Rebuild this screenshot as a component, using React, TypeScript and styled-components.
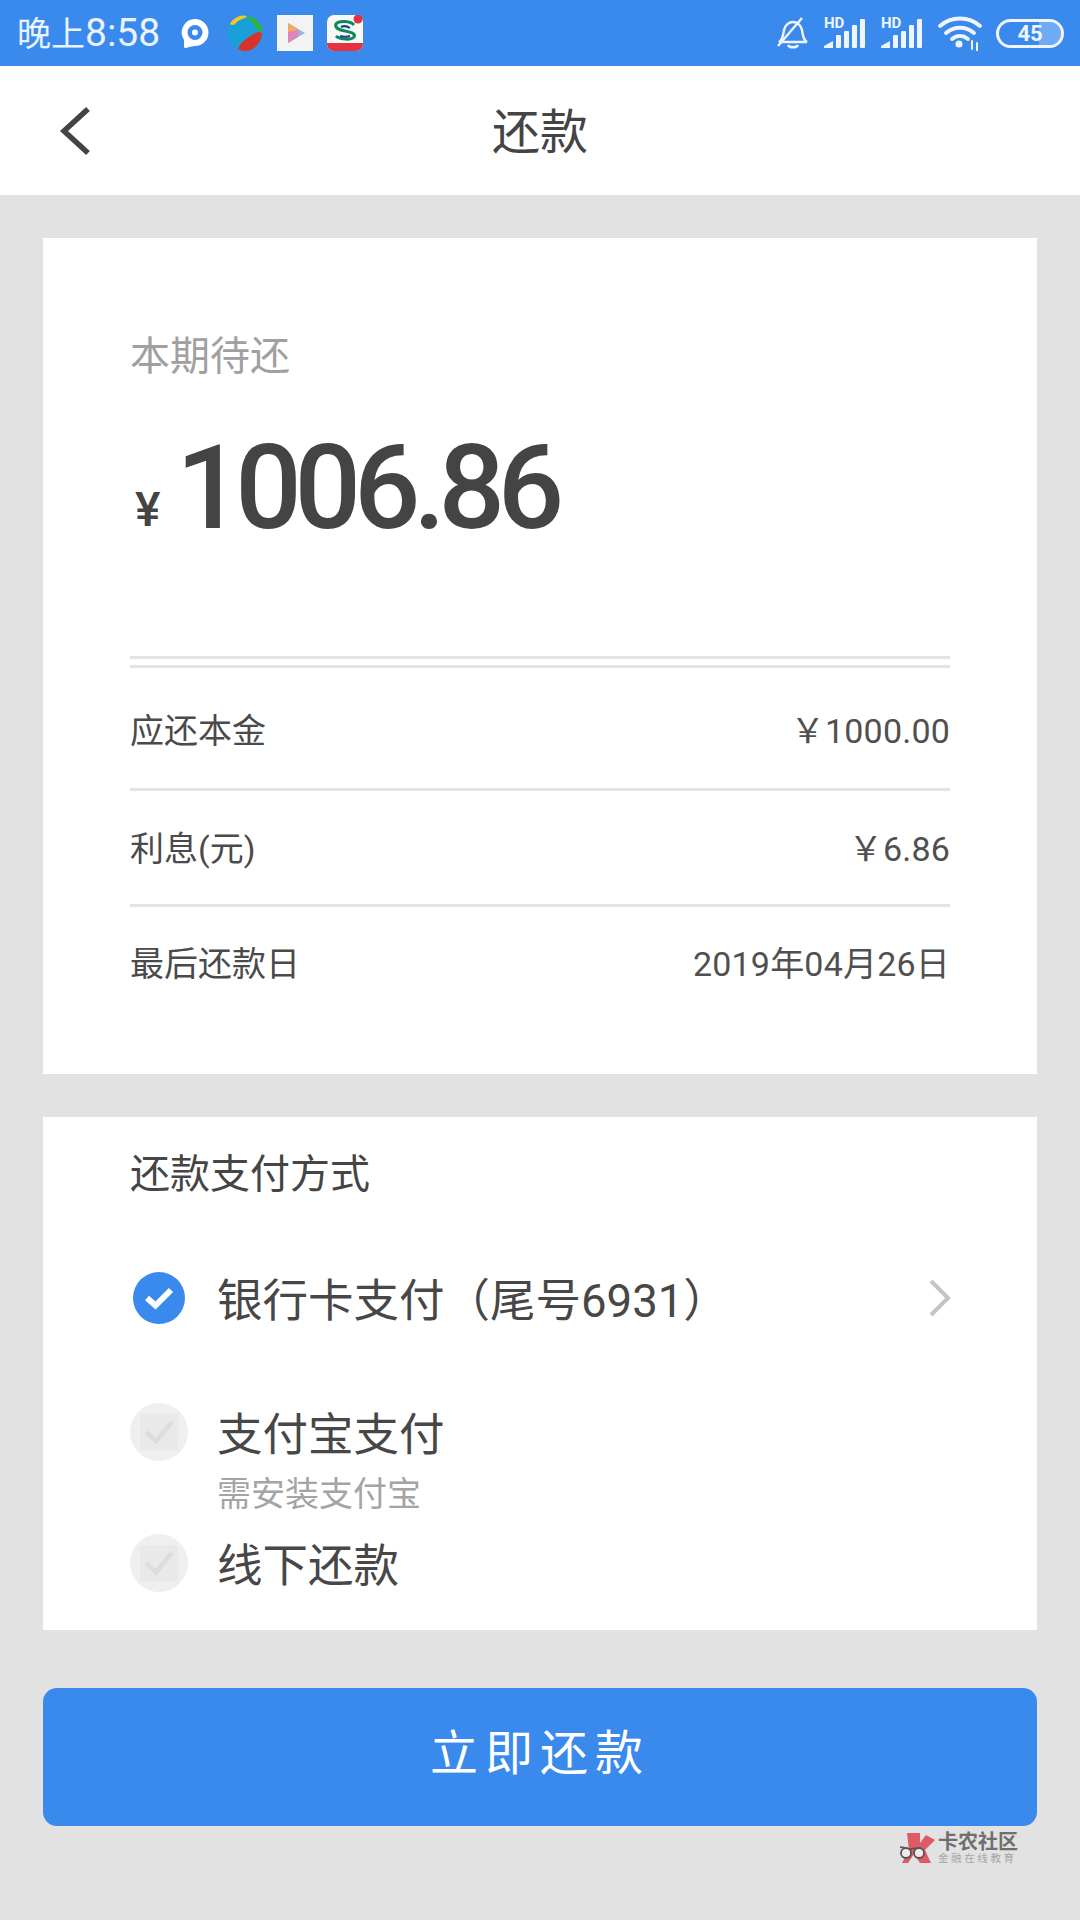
import React from "react";
import styled, { createGlobalStyle } from "styled-components";

const FONT = `Roboto, "Noto Sans CJK SC", "Noto Sans", sans-serif`;
const BLUE = "#3a8aee";
const GREY_BG = "#e2e2e2";
const RULE = "#e4e4e4";
const ICON = "#eef5ff";

const Global = createGlobalStyle`
  html, body { margin: 0; padding: 0; background: ${GREY_BG}; }
  * { box-sizing: border-box; }
`;

const Page = styled.div`
  width: 1080px;
  height: 1920px;
  background: ${GREY_BG};
  font-family: ${FONT};
  color: #454545;
  display: flex;
  flex-direction: column;
  overflow: hidden;
`;

const StatusBar = styled.header`
  height: 66px;
  background: ${BLUE};
  display: flex;
  align-items: center;
  justify-content: space-between;
  padding: 0 16px 0 17px;
  color: #eaf3ff;
`;
const StatusGroup = styled.div`
  display: flex;
  align-items: center;
`;
const Clock = styled.span`
  font-size: 34px;
  line-height: 66px;
  width: 163px;
  white-space: nowrap;
`;
const ClockDigits = styled.span`
  font-size: 39px;
  font-weight: 400;
`;
const AppIcon = styled.svg<{ $gap?: number }>`
  display: block;
  flex: none;
  margin-right: ${(p) => p.$gap ?? 0}px;
`;
const SignalBox = styled.div`
  position: relative;
  width: 41px;
  height: 32px;
  margin-right: 16px;
  flex: none;
`;
const SignalIcon = styled.svg`
  display: block;
`;
const HdLabel = styled.span`
  position: absolute;
  left: 0;
  top: -1px;
  font-size: 15px;
  line-height: 15px;
  font-weight: 700;
  color: ${ICON};
`;

const Nav = styled.nav`
  height: 129px;
  background: #fff;
  display: grid;
  grid-template-columns: 59px 32px 1fr 91px;
  align-items: center;
`;
const BackIcon = styled.svg`
  grid-column: 2;
  display: block;
`;
const NavTitle = styled.h1`
  grid-column: 3;
  margin: 0;
  padding-top: 4px;
  font-size: 48px;
  font-weight: 400;
  text-align: center;
  line-height: 124px;
  color: #444;
`;

const Main = styled.main`
  padding: 43px 43px 0;
  display: flex;
  flex-direction: column;
`;
const Card = styled.section<{ $h: number; $top: number }>`
  height: ${(p) => p.$h}px;
  margin-bottom: 43px;
  background: #fff;
  padding: ${(p) => p.$top}px 87px 0;
`;
const DueLabel = styled.div`
  font-size: 40px;
  line-height: 56px;
  color: #a0a0a0;
`;
const AmountRow = styled.div`
  display: flex;
  align-items: baseline;
  margin-top: 38px;
  height: 130px;
  line-height: 130px;
  color: #444;
`;
const Yen = styled.span`
  font-size: 48px;
  font-weight: 500;
  width: 46px;
  padding-left: 5px;
  position: relative;
  top: -2px;
`;
const Amount = styled.span`
  font-size: 117px;
  font-weight: 500;
  letter-spacing: -7.2px;
`;
const Rule = styled.div<{ $top?: number }>`
  height: 3px;
  background: ${RULE};
  margin-top: ${(p) => p.$top ?? 0}px;
`;
const InfoRow = styled.div<{ $h: number; $lift?: number }>`
  height: ${(p) => p.$h}px;
  padding-bottom: ${(p) => p.$lift ?? 0}px;
  display: flex;
  align-items: center;
  justify-content: space-between;
  font-size: 34px;
  color: #4a4a4a;
`;
const Value = styled.span`
  letter-spacing: 0.2px;
  color: #505050;
`;

const MethodsTitle = styled.h2`
  margin: 0;
  font-size: 40px;
  font-weight: 400;
  line-height: 56px;
  color: #454545;
`;
const Method = styled.div<{ $top: number }>`
  display: grid;
  grid-template-columns: 87px 1fr auto;
  align-items: center;
  margin-top: ${(p) => p.$top}px;
  height: 60px;
`;
const MethodName = styled.span`
  font-size: 45.5px;
  height: 60px;
  line-height: 68px;
  color: #474747;
  white-space: nowrap;
`;
const MethodNote = styled.div`
  font-size: 34px;
  line-height: 44px;
  color: #a4a4a4;
  margin: 10px 0 0 87px;
`;
const CheckOn = styled.span`
  width: 52px;
  height: 52px;
  margin-left: 3px;
  border-radius: 50%;
  background: ${BLUE};
  display: flex;
  align-items: center;
  justify-content: center;
`;
const CheckOff = styled.span`
  width: 58px;
  height: 58px;
  margin-left: 0;
  border-radius: 50%;
  background: #efefef;
  display: flex;
  align-items: center;
  justify-content: center;
`;
const Chevron = styled.svg`
  display: block;
  margin-right: -2px;
`;

const PayButton = styled.button`
  display: block;
  width: 100%;
  height: 138px;
  margin-top: 15px;
  padding: 0 0 16px;
  border: 0;
  border-radius: 14px;
  background: ${BLUE};
  color: #fff;
  font-family: ${FONT};
  font-size: 48px;
  letter-spacing: 7px;
  text-align: center;
`;

const Watermark = styled.div`
  display: flex;
  align-items: center;
  align-self: flex-end;
  margin: 6px 17px 0 0;
  width: 120px;
  height: 32px;
`;
const MarkText = styled.div`
  display: flex;
  flex-direction: column;
  margin-left: 1px;
`;
const MarkName = styled.span`
  font-size: 20px;
  line-height: 22px;
  font-weight: 700;
  color: #6f6f6f;
  white-space: nowrap;
`;
const MarkSub = styled.span`
  font-size: 10.5px;
  line-height: 12px;
  letter-spacing: 2.6px;
  color: #a6a6a6;
  white-space: nowrap;
`;
const BatteryShell = styled.div`
  position: relative;
  width: 68px;
  height: 29px;
  margin-left: 14px;
  border: 3px solid ${ICON};
  border-radius: 15px;
  overflow: hidden;
  display: flex;
  align-items: center;
  justify-content: center;
  font-size: 22px;
  font-weight: 700;
  color: ${ICON};
`;
const BatteryFill = styled.span`
  position: absolute;
  top: 0;
  right: 0;
  bottom: 0;
  width: 22px;
  background: rgba(255, 255, 255, 0.28);
  border-radius: 0 11px 11px 0;
`;
const BatteryLabel = styled.span`
  position: relative;
`;

const Bubble = () => (
  <AppIcon $gap={17} width="30" height="30" viewBox="0 0 30 30">
    <path d="M15 1a13.500 13.500 0 0 1 0 27c-3 0-6 1-9 2-1 .3-2-.3-2-1.500V22A13.500 13.500 0 0 1 15 1z" fill="#fff" />
    <circle cx="15" cy="14.500" r="7.500" fill={BLUE} />
    <circle cx="15" cy="14.500" r="3" fill="#fff" />
  </AppIcon>
);
const Ball = () => (
  <AppIcon $gap={14} width="36" height="38" viewBox="0 0 36 38">
    <circle cx="18" cy="19" r="18" fill="#1a9fd6" />
    <path d="M3 10C6 4 13 0 20 2c-2 3-7 3-10 6-2 3-5 4-7 2z" fill="#f4c823" />
    <path d="M21 2c7 1 13 7 15 14-3 3-6 0-8-4-2-3-6-6-7-10z" fill="#31b23c" />
    <path d="M11 35c2-6 8-10 14-14 3-2 7-4 10-2 0 7-5 14-11 17-5 2-10 1-13-1z" fill="#d9322d" />
  </AppIcon>
);
const PlayTile = () => (
  <AppIcon $gap={14} width="36" height="36" viewBox="0 0 36 36">
    <rect width="36" height="36" fill="#f3f3f3" />
    <path d="M11 8l17 10-17 10z" fill="#9db5d8" />
    <path d="M11 8l10 6-10 6z" fill="#f3a95e" />
    <path d="M11 17l10-2 0 7-10 6z" fill="#dd86b8" />
  </AppIcon>
);
const BankTile = () => (
  <AppIcon width="36" height="36" viewBox="0 0 36 36">
    <rect width="36" height="36" rx="7" fill="#f8f8f8" />
    <path d="M0 28h36v1a7 7 0 0 1-7 7H7a7 7 0 0 1-7-7z" fill="#e6323e" />
    <path d="M27 10c-3-4-15-5-18-1-2 4 4 6 9 7s11 2 9 6c-2 3-14 3-18-1" fill="none" stroke="#0c8a55" strokeWidth="3" />
    <path d="M23 13c-3-2-7-2-9-1M13 21c3 1 7 1 10 0" fill="none" stroke="#1a3f8f" strokeWidth="2" />
    <circle cx="31" cy="4" r="4.500" fill="#e6323e" />
  </AppIcon>
);

const MutedBell = () => (
  <AppIcon $gap={15} width="32" height="32" viewBox="0 0 32 32" fill="none" stroke={ICON} strokeWidth="2.400">
    <path d="M2 25c4-2 4-7 5-12 1-5 5-8 9-8s8 3 9 8c1 5 1 10 5 12z" />
    <path d="M11 28c1 3 9 3 10 0" />
    <path d="M1 29L25 1" />
  </AppIcon>
);
const Signal = () => (
  <SignalBox>
    <HdLabel>HD</HdLabel>
    <SignalIcon width="41" height="32" viewBox="0 0 41 32" fill={ICON}>
      <path d="M0 31v-2l9-5v7z" />
      <rect x="12" y="18" width="5" height="13" rx="1" />
      <rect x="20" y="14" width="5" height="17" rx="1" />
      <rect x="28" y="8" width="5" height="23" rx="1" />
      <rect x="36" y="2" width="5" height="29" rx="1" />
    </SignalIcon>
  </SignalBox>
);
const Wifi = () => (
  <AppIcon width="44" height="36" viewBox="0 0 44 36" fill="none" stroke={ICON} strokeWidth="3.800" strokeLinecap="round">
    <path d="M2 11c11-10 29-10 40 0" />
    <path d="M8 18c8-7 20-7 28 0" />
    <path d="M14 24c5-4 11-4 16 0" />
    <circle cx="21" cy="29" r="3.500" fill={ICON} stroke="none" />
    <path d="M34 26v8M39 28v8" strokeWidth="2" />
  </AppIcon>
);
const Tick = () => (
  <svg width="30" height="30" viewBox="0 0 30 30" fill="none" stroke="#fff" strokeWidth="6" strokeLinejoin="miter">
    <path d="M3 15l8.500 7.500L27 7" />
  </svg>
);
const OffTick = () => (
  <svg width="42" height="42" viewBox="0 0 42 42">
    <rect x="2" y="3" width="38" height="36" fill="#e9e9e9" />
    <path d="M8 21l10 9 16-19" fill="none" stroke="#dddddd" strokeWidth="5" />
  </svg>
);
const Gift = () => (
  <svg width="37" height="30" viewBox="0 0 37 30">
    <path d="M7 0h13v10l6-8 9 5-10 10 6 13H20l-6-9-6 9H2l7-13z" fill="#df5a64" />
    <path d="M0 14c3 0 6 1 8 3 4-2 8-2 12-1" fill="none" stroke="#555" strokeWidth="1.500" />
    <circle cx="6" cy="20" r="5" fill="#f4e9e9" stroke="#555" strokeWidth="1.800" />
    <circle cx="19" cy="20" r="5" fill="#f4e9e9" stroke="#555" strokeWidth="1.800" />
  </svg>
);

export default function App() {
  return (
    <Page>
      <Global />
      <StatusBar>
        <StatusGroup>
          <Clock>
            晚上<ClockDigits>8:58</ClockDigits>
          </Clock>
          <Bubble />
          <Ball />
          <PlayTile />
          <BankTile />
        </StatusGroup>
        <StatusGroup>
          <MutedBell />
          <Signal />
          <Signal />
          <Wifi />
          <BatteryShell>
            <BatteryFill />
            <BatteryLabel>45</BatteryLabel>
          </BatteryShell>
        </StatusGroup>
      </StatusBar>
      <Nav>
        <BackIcon width="32" height="50" viewBox="0 0 32 50" fill="none" stroke="#444" strokeWidth="5.500">
          <path d="M29 3L5 25l24 22" />
        </BackIcon>
        <NavTitle>还款</NavTitle>
      </Nav>
      <Main>
        <Card $h={836} $top={91}>
          <DueLabel>本期待还</DueLabel>
          <AmountRow>
            <Yen>¥</Yen>
            <Amount>1006.86</Amount>
          </AmountRow>
          <Rule $top={103} />
          <Rule $top={6} />
          <InfoRow $h={120}>
            <span>应还本金</span>
            <Value>￥1000.00</Value>
          </InfoRow>
          <Rule />
          <InfoRow $h={113} $lift={2}>
            <span>利息(元)</span>
            <Value>￥6.86</Value>
          </InfoRow>
          <Rule />
          <InfoRow $h={116} $lift={7}>
            <span>最后还款日</span>
            <Value>2019年04月26日</Value>
          </InfoRow>
        </Card>
        <Card $h={513} $top={30}>
          <MethodsTitle>还款支付方式</MethodsTitle>
          <Method $top={65}>
            <CheckOn>
              <Tick />
            </CheckOn>
            <MethodName>银行卡支付（尾号6931）</MethodName>
            <Chevron width="24" height="38" viewBox="0 0 24 38" fill="none" stroke="#c4c4c4" strokeWidth="4">
              <path d="M3 2l17 17L3 36" />
            </Chevron>
          </Method>
          <Method $top={74}>
            <CheckOff>
              <OffTick />
            </CheckOff>
            <MethodName>支付宝支付</MethodName>
          </Method>
          <MethodNote>需安装支付宝</MethodNote>
          <Method $top={17}>
            <CheckOff>
              <OffTick />
            </CheckOff>
            <MethodName>线下还款</MethodName>
          </Method>
        </Card>
        <PayButton>立即还款</PayButton>
        <Watermark>
          <Gift />
          <MarkText>
            <MarkName>卡农社区</MarkName>
            <MarkSub>金融在线教育</MarkSub>
          </MarkText>
        </Watermark>
      </Main>
    </Page>
  );
}
